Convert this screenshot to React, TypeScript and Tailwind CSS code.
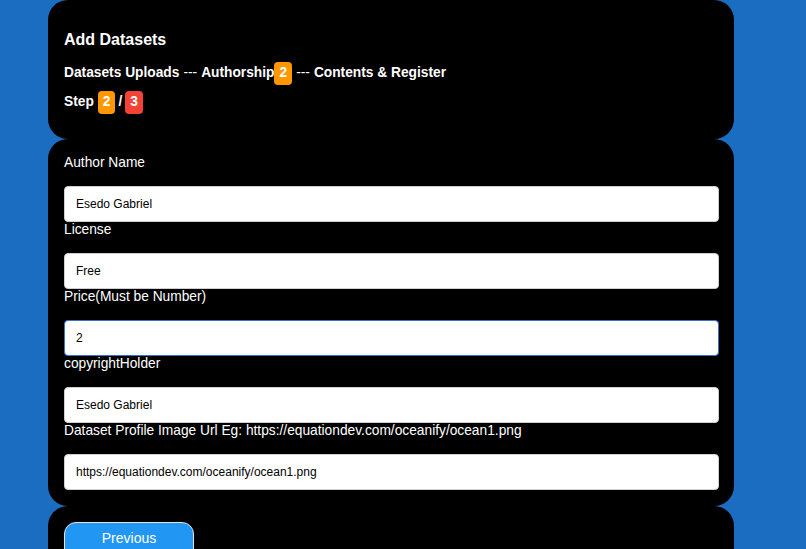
const fields = [
  { label: "Author Name", value: "Esedo Gabriel" },
  { label: "License", value: "Free" },
  { label: "Price(Must be Number)", value: "2", focused: true },
  { label: "copyrightHolder", value: "Esedo Gabriel" },
  {
    label: "Dataset Profile Image Url Eg: https://equationdev.com/oceanify/ocean1.png",
    value: "https://equationdev.com/oceanify/ocean1.png"
  }
];

export default function App() {
  return (
    <div className="h-[549px] overflow-hidden bg-[#1b6dc1] font-['Liberation_Sans',Arial,sans-serif] text-white">
      <div className="ml-[48px] w-[686px]">
        <div className="h-[139px] rounded-[20px] bg-black px-4 pt-[30px]">
          <h1 className="text-[16px] font-bold leading-[20px]">Add Datasets</h1>
          <p className="mt-[12px] flex h-[23px] items-center text-[13.75px] font-bold">
            Datasets Uploads <span className="mx-[4px] font-normal">---</span> Authorship
            <Badge tone="orange">2</Badge>
            <span className="ml-[4px] mr-[4px] font-normal">---</span>
            Contents &amp; Register
          </p>
          <p className="mt-[6px] flex h-[23px] items-center text-[13.75px] font-bold">
            Step
            <span className="ml-[4px]">
              <Badge tone="orange">2</Badge>
            </span>
            <span className="mx-[3px]">/</span>
            <Badge tone="red">3</Badge>
          </p>
        </div>

        <div className="h-[367px] rounded-[20px] bg-black pl-4 pr-[15px] pt-[16px]">
          {fields.map((field) => (
            <div key={field.label}>
              <label className="block h-[16px] text-[13.75px] leading-[16px]">{field.label}</label>
              <input
                readOnly
                value={field.value}
                className={
                  field.focused
                    ? "mt-[15px] block h-[36px] w-full rounded-[4px] border border-[#3b6fd0] bg-white px-[11px] text-[12px] text-black outline-none"
                    : "mt-[15px] block h-[36px] w-full rounded-[4px] border border-[#d0d0d0] bg-white px-[11px] text-[12px] text-black outline-none"
                }
              />
            </div>
          ))}
        </div>

        <div className="h-[80px] rounded-[20px] bg-black px-4 pt-[16px]">
          <button className="h-[36px] w-[130px] rounded-t-[12px] border border-[#e5e5e5] bg-[#2196f3] pb-[4px] text-[14px] text-white">
            Previous
          </button>
        </div>
      </div>
    </div>
  );
}

function Badge({ tone, children }: { tone: "orange" | "red"; children: string }) {
  return (
    <span
      className={
        tone === "orange"
          ? "inline-flex h-[23px] items-center rounded-[4px] bg-[#ff9800] px-[5px] text-white"
          : "inline-flex h-[23px] items-center rounded-[4px] bg-[#f44336] px-[5px] text-white"
      }
    >
      {children}
    </span>
  );
}
